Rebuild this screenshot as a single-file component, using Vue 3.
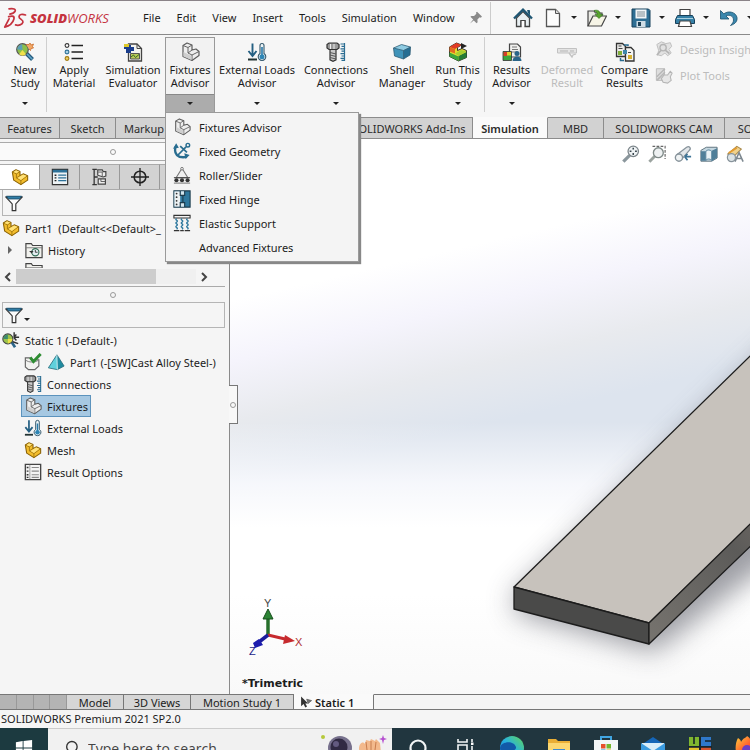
<script setup>
import { ref } from 'vue'

const menus = ['File', 'Edit', 'View', 'Insert', 'Tools', 'Simulation', 'Window']

const quickTools = [
  { icon: 'home', label: 'Home' },
  { icon: 'page', label: 'New', more: true },
  { icon: 'open', label: 'Open', more: true },
  { icon: 'save', label: 'Save', more: true },
  { icon: 'print', label: 'Print', more: true },
  { icon: 'undo', label: 'Undo', more: true },
]

const ribbon = [
  { icon: 'study', lines: ['New', 'Study'], more: true, divided: true },
  { icon: 'list', lines: ['Apply', 'Material'] },
  { icon: 'evaluator', lines: ['Simulation', 'Evaluator'] },
  { icon: 'fixture', lines: ['Fixtures', 'Advisor'], more: true, menu: true },
  { icon: 'loads', lines: ['External Loads', 'Advisor'], more: true },
  { icon: 'bolt', lines: ['Connections', 'Advisor'], more: true },
  { icon: 'shell', lines: ['Shell', 'Manager'] },
  { icon: 'run', lines: ['Run This', 'Study'], more: true, divided: true },
  { icon: 'results', lines: ['Results', 'Advisor'], more: true },
  { icon: 'deformed', lines: ['Deformed', 'Result'], disabled: true },
  { icon: 'compare', lines: ['Compare', 'Results'] },
]

const fixtureMenu = [
  { icon: 'fixture', label: 'Fixtures Advisor' },
  { icon: 'anchor', label: 'Fixed Geometry' },
  { icon: 'roller', label: 'Roller/Slider' },
  { icon: 'hinge', label: 'Fixed Hinge' },
  { icon: 'elastic', label: 'Elastic Support' },
  { icon: '', label: 'Advanced Fixtures' },
]

const leftTabs = ['Features', 'Sketch', 'Markup']
const rightTabs = ['SOLIDWORKS Add-Ins', 'Simulation', 'MBD', 'SOLIDWORKS CAM', 'SOLIDWORKS CAM TBM']
const activeTab = ref('Simulation')

const panelTabs = [
  { icon: 'part', label: 'Feature tree' },
  { icon: 'props', label: 'Properties' },
  { icon: 'config', label: 'Configurations' },
  { icon: 'target', label: 'Dimensions' },
  { icon: 'ball', label: 'Display' },
]

const study = [
  { icon: 'bolt', label: 'Connections' },
  { icon: 'fixture', label: 'Fixtures' },
  { icon: 'loads', label: 'External Loads' },
  { icon: 'part', label: 'Mesh' },
  { icon: 'options', label: 'Result Options' },
]
const selected = ref('Fixtures')

const viewTools = ['zoomfit', 'zoomarea', 'prevview', 'section', 'appearance']
const sheets = ['Model', '3D Views', 'Motion Study 1']
const taskIcons = ['cortana', 'taskview', 'edge', 'folder', 'store', 'mail', 'tiles', 'firefox']
</script>

<template>
  <div class="app">
    <svg class="sprite" aria-hidden="true">
      <defs>
        <linearGradient id="g-edge" x1="0" y1="1" x2="1" y2="0"><stop offset="0" stop-color="#1670c8" /><stop offset=".5" stop-color="#27b2e0" /><stop offset="1" stop-color="#62d657" /></linearGradient>
        <linearGradient id="g-fire" x1="0" y1="0" x2="1" y2="1"><stop offset="0" stop-color="#ffcf3a" /><stop offset=".5" stop-color="#ff5a2e" /><stop offset="1" stop-color="#c427a0" /></linearGradient>
      </defs>
      <symbol id="i-home" viewBox="0 0 20 20"><path d="M3.500 10v8.500h4.500v-5.500h4v5.500h4.500V10L10 3.500z" fill="#e9f0f3" stroke="#444" stroke-width="1.300" /><path d="M8 18v-5.500h4V18" fill="#fff" stroke="#444" stroke-width="1.200" /><path d="M1 10.500 10 1.700l9 8.800" fill="none" stroke="#1f5673" stroke-width="2.400" /><path d="M14.500 2.500h2v4z" fill="#1f5673" stroke="#1f5673" /></symbol>
      <symbol id="i-page" viewBox="0 0 20 20"><path d="M3.500 1.500h9l4 4v13h-13z" fill="#fdfdfd" stroke="#555" stroke-width="1.300" /><path d="M12.500 1.500v4h4" fill="#ddd" stroke="#555" /></symbol>
      <symbol id="i-open" viewBox="0 0 20 20"><path d="M1 18V3h6l1.500 2H15v4" fill="#e9e9e4" stroke="#444" stroke-width="1.200" /><path d="m1 18 5-10h13.500l-5 10z" fill="#f6f4e6" stroke="#444" stroke-width="1.200" /><path d="M7 2.500c4-1 6 .5 6.500 4h2.500l-4 4-4-4h2.500C10 4.500 9 3.500 7 2.500z" fill="#59a32d" stroke="#2d6b17" stroke-width=".6" /></symbol>
      <symbol id="i-save" viewBox="0 0 20 20"><path d="M1 1h16.500L19 2.500V19H1z" fill="#2e6e93" stroke="#17405a" /><path d="M4.500 1.500h11v9h-11z" fill="#f2f5f6" /><path d="M6 4h8M6 6h8M6 8h8" stroke="#7e8d95" /><path d="M5.500 13h9v6h-9z" fill="#cfdde5" /><path d="M7 14h3v4H7z" fill="#1c3f54" /></symbol>
      <symbol id="i-print" viewBox="0 0 20 20"><path d="M5 8V1.500h10V8" fill="#fff" stroke="#444" stroke-width="1.200" /><path d="M2.500 7.500h15l2 4v4H.5v-4z" fill="#3580a6" stroke="#17405a" /><path d="M5 13h10l1.500 5.500h-13z" fill="#fff" stroke="#444" stroke-width="1.200" /><path d="M2 10.500h16" stroke="#a8cfe0" /></symbol>
      <symbol id="i-undo" viewBox="0 0 20 20"><path d="M1.500 2.500v8.500H10L7 8c4-2 7.500.5 7.500 4 0 2-1 3.500-3 5.500 5-1.500 7-4.500 6.500-8C17 4.500 10 2 4.800 5.800z" fill="#3a87ad" stroke="#1b506d" stroke-width=".8" /></symbol>
      <symbol id="i-pin" viewBox="0 0 20 20"><path d="m11.500 1 7 7-1.500 1.500-1.700-.5-3.300 3.300.3 3.700-1.500 1.500-4-4L1.500 18 1 18.500 2 17l4-4.700-4-4L3.500 7l3.700.2 3.300-3.200-.5-1.700z" fill="#8a8a8a" /></symbol>
      <symbol id="i-study" viewBox="0 0 20 20"><path d="m11 11 6.500 6.500" stroke="#255b7d" stroke-width="4" /><path d="m11.500 11.500 5.700 5.700" stroke="#5fa4c8" stroke-width="1.600" /><circle cx="7.500" cy="7.500" r="5.800" fill="#8cc04a" stroke="#555" stroke-width="1.200" /><path d="M2.200 7.500a5.300 5.300 0 0 1 5-5.200L7.500 8z" fill="#5b9fb8" /><path d="M7.500 8 4 12.300a5.500 5.500 0 0 0 7 0z" fill="#f0e04a" /><path d="M11 2.500h3l1-1.500 1 2 2.500-1-1 2.500 1 1.500-2.500.5-.5 2-1.500-1.500" fill="#f3a866" stroke="#c96d2c" stroke-width=".8" /></symbol>
      <symbol id="i-list" viewBox="0 0 20 20"><path d="M7.500 3.500H19M7.500 10H19M7.500 16.500H19" stroke="#222" stroke-width="1.600" /><g fill="#fff" stroke-width="1.100"><circle cx="3" cy="3.500" r="1.900" stroke="#333" /><circle cx="3" cy="10" r="1.900" stroke="#2d7198" fill="#a9d1e5" /><circle cx="3" cy="16.500" r="1.900" stroke="#a07a10" fill="#ecd068" /></g></symbol>
      <symbol id="i-evaluator" viewBox="0 0 20 20"><path d="M5.500 2h8.500l4.500 4.500V19h-13z" fill="#f2f2ee" stroke="#444" stroke-width="1.300" /><path d="M14 2v4.500h4.500" fill="none" stroke="#444" /><path d="M1 3h7v2h3v4H8v2H3V7H1z" fill="#1a3d8c" /><path d="M1 2h5v3H1z" fill="#ddc92c" /><path d="M7.500 11.500h9v5.500h-9z" fill="#b9c85a" stroke="#555" /><path d="m8 15 2.500-2 2 2.500 3.500-3" fill="none" stroke="#35691d" /></symbol>
      <symbol id="i-fixture" viewBox="0 0 20 20"><path d="m3 3.500 4-2.500 5 2v5l4-1 3 2.500v4l-7 5-9-4z" fill="#eee" stroke="#5d5d5d" stroke-width="1.200" stroke-linejoin="round" /><path d="m3 3.500 5 2 4-2.500M8 5.500V11l4 2 7-3.500M12 13v5.500M8 11l4-3" fill="none" stroke="#666" /><path d="m3.500 10 8 4v4l-8-3.500z" fill="#cfcfcf" /></symbol>
      <symbol id="i-loads" viewBox="0 0 20 20"><path d="M5.500 1.500V13M1.500 9l4 5 4-5" fill="none" stroke="#245f82" stroke-width="1.900" /><path d="M1 17.500h9" stroke="#233" stroke-width="2" /><path d="M13 11.500V3.500a2 2 0 0 1 4 0v8a3.800 3.800 0 1 1-4 0z" fill="#eef5f8" stroke="#33576b" stroke-width="1.100" /><path d="M15 5v9" stroke="#277aaa" stroke-width="1.600" /><circle cx="15" cy="14.800" r="2.500" fill="#2f86b5" /></symbol>
      <symbol id="i-bolt" viewBox="0 0 20 20"><path d="M1 2.500 3 1h8l2 1.500V6l-2 1.500H3L1 6z" fill="#9a9a9a" stroke="#333" stroke-width="1.200" /><path d="M4.500 2v5M8 2v5" stroke="#eee" /><path d="M4 7.500h6v10.300L7 19.300l-3-1.500z" fill="#c9c9c9" stroke="#333" stroke-width="1.200" /><path d="m4 10.500 6 1.500m-6 1 6 1.500m-6 1 6 1.500" stroke="#555" /><path d="M18.500 1v18M14.500 2h4m-3 2.400h3m-4 2.400h4m-3 2.400h3m-4 2.400h4m-3 2.400h3m-4 2.400h4m-3 2h3" fill="none" stroke="#2b6d92" stroke-width="1.200" /></symbol>
      <symbol id="i-shell" viewBox="0 0 20 20"><path d="m1.500 6 8-3.500L18.500 5l-7 3.500z" fill="#8ecbe2" /><path d="m1.500 6 10 2.500V17l-9-3z" fill="#3f93b9" /><path d="m11.500 8.500 7-3.500-.5 8-6.500 4z" fill="#256d92" /><path d="m1.500 6 8-3.500L18.500 5l-.5 8-6.500 4-9-3zM1.500 6l10 2.500 7-3.500M11.500 8.500V17" fill="none" stroke="#2c5c75" stroke-width=".8" /></symbol>
      <symbol id="i-run" viewBox="0 0 20 20"><path d="m1.500 5 7-4 5 2-4 2.500v3l4.500-2 4.500 2v7l-8 3.500-9-4.500z" fill="#e5d92f" stroke="#333" /><path d="m1.500 5 7-4 5 2-6.500 4z" fill="#e03a26" /><path d="m1.500 5 5.500 2v4.500L1.500 9.500z" fill="#e26a22" /><path d="m1.500 10.500 9 4V19l-9-4.500z" fill="#3ba53c" /><path d="m10.500 14 8-4v5.500l-8 3.500z" fill="#267c36" /><path d="m7 11.500 6-3.500 5.500 1.500-8 4.500z" fill="#a6d032" /><path d="m13 1 6 3-6 3z" fill="#222" /></symbol>
      <symbol id="i-results" viewBox="0 0 20 20"><path d="M7.500 2h8l3 3v10h-11z" fill="#f0f0ee" stroke="#444" stroke-width="1.200" /><path d="M10 5h5M10 7.500h6M10 10h5" stroke="#777" /><path d="M1 9.500h8.500v9H1z" fill="#3ba53c" stroke="#333" stroke-width=".8" /><path d="M1.500 10H5v4H1.500z" fill="#d63d28" /><path d="M5 10h4v3.500H5z" fill="#e4cc2c" /><circle cx="15" cy="11.500" r="2.500" fill="#2a6488" /><path d="M10.500 19c0-6 9-6 9 0z" fill="#2a6488" /></symbol>
      <symbol id="i-deformed" viewBox="0 0 20 20"><path d="M.5 6.500h19v4.500H.5z" fill="#e4e4e4" stroke="#c2c2c2" /><path d="M3 9h8m2 0h4" stroke="#b5b5b5" /><path d="m12 11 3 4 1-2 3-1" fill="none" stroke="#c2c2c2" stroke-width="1.300" /></symbol>
      <symbol id="i-compare" viewBox="0 0 20 20"><path d="M1.500 1.500h6l3 3v10h-9z" fill="#ececea" stroke="#333" stroke-width="1.300" /><path d="M10.500 5.500h5.500l3 3V19h-8.500z" fill="#f4f4f2" stroke="#333" stroke-width="1.300" /><path d="M3 9h4v4H3z" fill="#7fae39" /><path d="M13 13h4v4h-4z" fill="#d8b231" /><path d="M3.500 4h3M3.500 6.500h4M13 10.500h3" stroke="#444" /><path d="M5.500 16v2.500H9M9 3h4v1" fill="none" stroke="#286b8f" stroke-width="1.500" /><path d="M8 8h4v4H8z" fill="#3f87ad" /></symbol>
      <symbol id="i-insight" viewBox="0 0 20 20"><path d="m2 5 5-3 5 2 5-1 1.500 4-3 3.500 2.500 4-4 3-3-3-4 3-4-1 1-5z" fill="#e2e2e2" stroke="#bbb" /><circle cx="9" cy="8.500" r="3.500" fill="none" stroke="#b5b5b5" stroke-width="1.500" /><path d="m11 11 5 4M2 17l5-6" stroke="#b5b5b5" stroke-width="1.800" /></symbol>
      <symbol id="i-plot" viewBox="0 0 20 20"><path d="M1.500 3h9v13h-9z" fill="#dedede" stroke="#b8b8b8" /><path d="m2 12 9-9M2 16l9-9" stroke="#b8b8b8" stroke-width="1.800" /><path d="M10 10h4l3-4 2 2-2 4 1 4-4 3-5-1-2-4z" fill="#e6e6e6" stroke="#b5b5b5" stroke-width="1.200" /></symbol>
      <symbol id="i-anchor" viewBox="0 0 20 20"><path d="M14.500 5.500 5 15M8 4.500l7.500 7" fill="none" stroke="#286d90" stroke-width="1.900" /><circle cx="16.500" cy="3.500" r="2" fill="none" stroke="#286d90" stroke-width="1.600" /><path d="M3 5c-2.500 8 2 13.500 12.500 11.500" fill="none" stroke="#286d90" stroke-width="2.600" /><path d="m0 7.500 3.500-6 3 5zM12.500 12.500l6 2-4.500 4.500z" fill="#286d90" /></symbol>
      <symbol id="i-roller" viewBox="0 0 20 20"><path d="M10 2.500 3.500 13h13z" fill="#f0f0f0" stroke="#777" stroke-width="1.200" /><circle cx="10" cy="3" r="1.500" fill="#eee" stroke="#777" /><path d="M1 13h18" stroke="#444" stroke-width="1.200" /><g fill="#333"><circle cx="3.800" cy="15.800" r="2.300" /><circle cx="10" cy="15.800" r="2.300" /><circle cx="16.200" cy="15.800" r="2.300" /></g><path d="M1 19h18" stroke="#666" /></symbol>
      <symbol id="i-hinge" viewBox="0 0 20 20"><path d="M1 1h18v18H1z" fill="#2e789e" stroke="#1d3c4d" stroke-width="1.200" /><path d="M1.500 1.500H8v17H1.500z" fill="#eef2f3" /><g fill="#333"><circle cx="4" cy="4" r="1" /><circle cx="4" cy="8" r="1" /><circle cx="4" cy="12" r="1" /><circle cx="4" cy="16" r="1" /></g><path d="M8.500 1.500h4v5h-4zM8.500 14h4v4.500h-4z" fill="#d3e6ee" /><path d="M8 1v5h3v8H8v5M13 1v5h-2m0 8h2v5" fill="none" stroke="#1d3c4d" stroke-width="1.200" /></symbol>
      <symbol id="i-elastic" viewBox="0 0 20 20"><path d="M1 1.500h18v3H1z" fill="#f4f4f4" stroke="#333" stroke-width="1.200" /><path d="M4 5c-3 2 3 2 0 4s3 2 0 4 3 2 0 4M10 5c-3 2 3 2 0 4s3 2 0 4 3 2 0 4M16 5c-3 2 3 2 0 4s3 2 0 4 3 2 0 4" fill="none" stroke="#2e789e" stroke-width="1.500" /><path d="M1 18.500h6m1 0h4m1 0h6" stroke="#333" stroke-width="1.400" /></symbol>
      <symbol id="i-part" viewBox="0 0 20 20"><path d="m1.500 4.500 4-2.500 4.500 2v4.500l3.500-2 5 2v5L11 18.500l-8-5z" fill="#f3bd2c" stroke="#8a6206" stroke-width="1.200" stroke-linejoin="round" /><path d="m1.500 4.500 4.500 2 4-2.500M6 6.500V11l5 3 7.500-5.500M11 14v4.500M6 11l4-2.500" fill="none" stroke="#a0760f" /><path d="m2.700 4.400 2.900-1.800L9 4 6 5.900zM7.300 11.100l6.200-3.900 3.700 1.500-6.200 4.500z" fill="#ffe27a" /></symbol>
      <symbol id="i-props" viewBox="0 0 20 20"><path d="M1.500 1.500h17v17h-17z" fill="#eef3f5" stroke="#333" stroke-width="1.300" /><path d="M2 2h16v3H2z" fill="#2d7198" /><path d="M4 8h2M4 11h2M4 14h2" stroke="#222" stroke-width="1.500" /><path d="M8 8h9M8 11h9M8 14h9" stroke="#2d7198" stroke-width="1.400" /></symbol>
      <symbol id="i-config" viewBox="0 0 20 20"><path d="M3.500 1v18M1.500 1.500h5M3.500 10h4M1.500 18.500h5" fill="none" stroke="#333" stroke-width="1.400" /><path d="M7.500 2h5l1 2h3v5l-3 1-6-2zM8 12h8v6H8z" fill="#eee" stroke="#444" stroke-width="1.300" /><path d="M8 4.500h4.500V9M11 12v3h5" fill="none" stroke="#555" /></symbol>
      <symbol id="i-target" viewBox="0 0 20 20"><circle cx="10" cy="10" r="6.500" fill="none" stroke="#222" stroke-width="1.700" /><path d="M10 0v20M0 10h20" stroke="#222" stroke-width="1.500" /></symbol>
      <symbol id="i-ball" viewBox="0 0 20 20"><circle cx="10" cy="10" r="8" fill="#5aa2c6" /><path d="M10 2a8 8 0 0 1 8 8h-8z" fill="#e6c12f" /><path d="M2 10a8 8 0 0 0 8 8v-8z" fill="#c73b2b" /></symbol>
      <symbol id="i-filter" viewBox="0 0 20 20"><path d="M1 3.500h18l-7 7.500v7.500h-4V11z" fill="#fbfbfb" stroke="#333" stroke-width="1.300" /><path d="M1.500 2.500h17l-2.500 3H4z" fill="#2f7da6" stroke="#1c4f6c" /></symbol>
      <symbol id="i-history" viewBox="0 0 20 20"><path d="M1 3h6l1.500 2H19v13.500H1z" fill="#f2f2ee" stroke="#444" stroke-width="1.300" /><path d="M1 7.500h18" stroke="#777" /><circle cx="11.500" cy="12.500" r="4" fill="#e4eef2" stroke="#2d6b53" stroke-width="1.200" /><path d="M11.500 10v2.500h2.500" fill="none" stroke="#333" /><path d="m4.500 11 3 3 2-3z" fill="#333" /></symbol>
      <symbol id="i-static" viewBox="0 0 20 20"><path d="m10.500 12 4 6" stroke="#2b6588" stroke-width="3" /><circle cx="6.500" cy="8.800" r="5.600" fill="#9cc44a" stroke="#444" stroke-width="1.200" /><path d="M1.500 8.800a5 5 0 0 1 5-5v5z" fill="#3d8c6d" /><path d="M6.500 8.800h5a5 5 0 0 1-5 5z" fill="#ece04a" /><path d="M19 7h-6m0 0 3-3m-3 3 3 3.500M13.500 7V1.500M12 12l6 2" fill="none" stroke="#333" stroke-width="1.600" /></symbol>
      <symbol id="i-check" viewBox="0 0 20 20"><path d="M1.500 5.500h5.500l1.500 2h8v7l-4.500 4H5l-3.500-3z" fill="#f2f2f0" stroke="#666" stroke-width="1.300" /><path d="M2 8c3 2.500 10 3 14 0" fill="none" stroke="#777" /><path d="m7 5 3.500 4.500L18.500 1" fill="none" stroke="#2f8d33" stroke-width="3.200" /></symbol>
      <symbol id="i-cone" viewBox="0 0 20 20"><path d="M11 2 1.500 16.500l10 2z" fill="#5fd0dc" /><path d="m11 2 .5 16.500 7.500-4z" fill="#1f8ba0" /><path d="M11 2 1.500 16.500l10 2 7.500-4z" fill="none" stroke="#286b7a" stroke-width=".9" /><path d="m11 2 .5 16.500" stroke="#ecfbfc" stroke-width=".8" /></symbol>
      <symbol id="i-options" viewBox="0 0 20 20"><path d="M1.500 1.500h17v17h-17z" fill="#f4f4f4" stroke="#444" stroke-width="1.500" /><path d="M6.500 2v16" stroke="#999" /><path d="M3 5h2M3 9h2M3 13h2M3 16h2" stroke="#333" stroke-width="1.500" /><path d="M8.500 5h8M8.500 9h8M8.500 13h8M8.500 16h8" stroke="#8a8a8a" stroke-width="1.200" /></symbol>
      <symbol id="i-cursor" viewBox="0 0 20 20"><path d="M3 2v14l3.500-3 2.500 5 2.500-1.500-2.500-4.500h4z" fill="#333" /><path d="m11 6 7 2-5 4z" fill="#777" stroke="#555" /></symbol>
      <symbol id="i-zoomfit" viewBox="0 0 20 20"><path d="m8.500 11.500-7 7" stroke="#8b979d" stroke-width="3.600" /><circle cx="12.500" cy="7" r="5.800" fill="#eef2f4" stroke="#7b8489" stroke-width="1.400" /><path d="M12.500 3v2m0 4v2M8.500 7h2m4 0h2" stroke="#39464d" stroke-width="1.700" /></symbol>
      <symbol id="i-zoomarea" viewBox="0 0 20 20"><path d="m7.500 12.500-6 6" stroke="#9ba39f" stroke-width="3.200" /><circle cx="11.500" cy="8.500" r="5.500" fill="#eef1f2" stroke="#7f8a88" stroke-width="1.500" /><path d="M5 1.500h14v14" fill="none" stroke="#666" stroke-width="1.300" stroke-dasharray="3 1.500" /></symbol>
      <symbol id="i-prevview" viewBox="0 0 20 20"><path d="M3.500 10.500 14 2.500c3-2 5.500 1 3 3.500L8.500 16z" fill="#e3e7ea" stroke="#87939b" stroke-width="1.400" /><circle cx="5.500" cy="14" r="4" fill="#f0f3f4" stroke="#87939b" stroke-width="1.500" /><path d="M19 13h-7m0 0 3-3m-3 3 3 4" fill="none" stroke="#3c7396" stroke-width="1.900" /></symbol>
      <symbol id="i-section" viewBox="0 0 20 20"><path d="m1 6 6-3.500h12v12L13 18H1z" fill="#c5d7e0" stroke="#627782" stroke-width="1.100" /><path d="M1 7h5.500v10.500H1zM13 6.500l6-3V14l-6 4z" fill="#507f99" /><path d="M6.500 7c2-2 4.500-2 6.500 0v10c-2-2-4.500-2-6.500 0z" fill="#e9f1f5" stroke="#507f99" /></symbol>
      <symbol id="i-appearance" viewBox="0 0 20 20"><path d="M2 10 12 1.500l5 3-8 8z" fill="#f0d28d" stroke="#a9894a" stroke-width="1.200" /><circle cx="6" cy="14" r="4.500" fill="#dce3e6" stroke="#87939b" stroke-width="1.300" /><path d="m10 18.500 4.500-10 4.500 10m-7-3.500h5" fill="none" stroke="#7d8890" stroke-width="1.700" /><path d="m3 9 9-6" stroke="#e49b2f" stroke-width="2" /></symbol>
      <symbol id="i-search" viewBox="0 0 20 20"><circle cx="11" cy="7.500" r="5.800" fill="none" stroke="#333" stroke-width="1.500" /><path d="m7 12-5 6" stroke="#333" stroke-width="1.500" /></symbol>
      <symbol id="i-windows" viewBox="0 0 20 20"><path d="m1 3.500 7.500-1.200v7.200H1zM9.500 2.200 19 1v8.500H9.500zM1 10.500h7.500v7.200L1 16.500zM9.500 10.500H19V19l-9.500-1.200z" fill="#fff" /></symbol>
      <symbol id="i-cortana" viewBox="0 0 24 24"><circle cx="12" cy="12" r="7.500" fill="none" stroke="#f2f5f6" stroke-width="2.200" /></symbol>
      <symbol id="i-taskview" viewBox="0 0 24 24"><path d="M5 3v3h9V3M5 21v-3h9v3M5 9h9v6H5zM19 3v3m0 4v11" fill="none" stroke="#f2f5f6" stroke-width="1.600" /><path d="M18 6.500h2.500V9H18z" fill="#fff" /></symbol>
      <symbol id="i-edge" viewBox="0 0 24 24"><circle cx="12" cy="12" r="12" fill="url(#g-edge)" /><path d="M0 12C1 5 14 4 16 11c.5 3-3 3-3 5 0 3 7 4 10 0-4 10-20 10-23-4z" fill="#125aa8" /></symbol>
      <symbol id="i-folder" viewBox="0 0 24 24"><path d="M1 3h8l2 2h12v17H1z" fill="#e9ae35" /><path d="M1 7h22v15H1z" fill="#fbd771" /><path d="M6 13h12v9H6z" fill="#3d8ad0" /></symbol>
      <symbol id="i-store" viewBox="0 0 24 24"><path d="M7 5V1h10v4" fill="none" stroke="#41a6e2" stroke-width="2" /><path d="M0 4h24v17H0z" fill="#f3f6f7" /><path d="M7 8h4.500v4.500H7z" fill="#e64f2b" /><path d="M12.500 8H17v4.500h-4.500z" fill="#73b62e" /><path d="M7 13.500h4.500V18H7z" fill="#2a9bd7" /><path d="M12.500 13.500H17V18h-4.500z" fill="#f0b52a" /></symbol>
      <symbol id="i-mail" viewBox="0 0 24 24"><path d="m0 9 12-8 12 8v13H0z" fill="#1566b8" /><path d="M1 7h22v14H1z" fill="#d9edf9" /><path d="m0 7 12 8 12-8v15H0z" fill="#3a9be0" /></symbol>
      <symbol id="i-tiles" viewBox="0 0 24 24"><path d="M1 1h10v9H1z" fill="#7fb72f" /><path d="M13 1h10v9H13z" fill="#2f78c9" /><path d="M1 11h10v11H1z" fill="#e4c22f" /><path d="M13 11h10v11H13z" fill="#d7542d" /><path d="M12 0v24M0 11h24M6 0v8M17 5h6" stroke="#142229" stroke-width="1.600" /></symbol>
      <symbol id="i-firefox" viewBox="0 0 24 24"><path d="M3 2c2 1 3 3 3 4 2-4 5-4 6-6 3 2 4 4 5 6l2-2c3 4 5 8 4 12-3 9-19 9-22-1C0 12 1 5 3 2z" fill="url(#g-fire)" /><circle cx="12" cy="14" r="5" fill="#6b3fc4" /></symbol>
    </svg>

    <header class="menubar">
      <svg class="brand" viewBox="0 0 30 24" aria-hidden="true">
        <g fill="none" stroke="#c5333f" stroke-width="2" stroke-linecap="round" stroke-linejoin="round">
          <path d="M7 1.500c5-1 8 .3 7 2.500-.8 1.800-3 3-6 3.500" />
          <path d="M6.500 10.500c5-1.500 7-.5 6 3-1.200 4.500-4.500 7.500-10.500 9L7 13" />
          <path d="M26 8.500c-4-1.500-7.500-.5-7.500 2 0 3 5.500 3.500 4.500 6.500-1 3-5 4-8.500 3" />
        </g>
      </svg>
      <span class="word"><b>SOLID</b>WORKS</span>
      <nav class="menus">
        <button v-for="m in menus" :key="m" type="button">{{ m }}</button>
      </nav>
      <button class="pin" type="button" aria-label="Pin menu"><svg class="ic-s"><use href="#i-pin" /></svg></button>
      <div class="quick">
        <button v-for="t in quickTools" :key="t.icon" type="button" :aria-label="t.label" :class="{ solo: !t.more }">
          <svg class="ic"><use :href="'#i-' + t.icon" /></svg>
          <i v-if="t.more" class="caret"></i>
        </button>
      </div>
    </header>

    <section class="ribbon">
      <div v-for="r in ribbon" :key="r.icon" class="cell" :class="{ divided: r.divided, open: r.menu }">
        <button class="tool" type="button" :disabled="r.disabled">
          <svg class="ic"><use :href="'#i-' + r.icon" /></svg>
          <span v-for="l in r.lines" :key="l">{{ l }}</span>
          <span v-if="r.more" class="drop"><i class="caret"></i></span>
        </button>
        <ul v-if="r.menu" class="popup">
          <li v-for="f in fixtureMenu" :key="f.label">
            <button type="button"><svg class="ic"><use v-if="f.icon" :href="'#i-' + f.icon" /></svg>{{ f.label }}</button>
          </li>
        </ul>
      </div>
      <div class="side">
        <button type="button" disabled><svg class="ic"><use href="#i-insight" /></svg>Design Insight</button>
        <button type="button" disabled><svg class="ic"><use href="#i-plot" /></svg>Plot Tools</button>
      </div>
    </section>

    <nav class="tabs">
      <button v-for="t in leftTabs" :key="t" type="button" :class="{ active: t === activeTab }" @click="activeTab = t">{{ t }}</button>
      <span class="gap"></span>
      <button v-for="t in rightTabs" :key="t" type="button" :class="{ active: t === activeTab }" @click="activeTab = t">{{ t }}</button>
    </nav>

    <main class="work">
      <aside class="panel">
        <div class="grip first"><i class="knob"></i></div>
        <div class="ptabs">
          <button v-for="(p, i) in panelTabs" :key="p.icon" type="button" :aria-label="p.label" :class="{ active: i === 0 }"><svg class="ic"><use :href="'#i-' + p.icon" /></svg></button>
        </div>
        <button class="filter upper" type="button" aria-label="Filter features"><svg class="ic"><use href="#i-filter" /></svg></button>
        <div class="row root"><svg class="ic"><use href="#i-part" /></svg><span>Part1&nbsp; (Default&lt;&lt;Default&gt;_</span></div>
        <div class="row history"><i class="twist"></i><svg class="ic"><use href="#i-history" /></svg>History</div>
        <div class="peek"><svg class="ic"><use href="#i-history" /></svg></div>
        <div class="scroll"><button type="button" aria-label="Scroll left"><svg class="chev" viewBox="0 0 8 10"><path d="M6 1 2 5l4 4" /></svg></button><div class="track"><div class="thumb"></div></div><button type="button" aria-label="Scroll right"><svg class="chev" viewBox="0 0 8 10"><path d="m2 1 4 4-4 4" /></svg></button></div>
        <div class="grip"><i class="knob"></i></div>
        <button class="filter" type="button" aria-label="Filter study"><svg class="ic"><use href="#i-filter" /></svg><i class="caret"></i></button>
        <div class="tree">
          <div class="row root"><svg class="ic"><use href="#i-static" /></svg>Static 1 (-Default-)</div>
          <div class="row leaf"><svg class="ic"><use href="#i-check" /></svg><svg class="ic"><use href="#i-cone" /></svg>Part1 (-[SW]Cast Alloy Steel-)</div>
          <button v-for="s in study" :key="s.label" type="button" class="row leaf" :class="{ picked: s.label === selected }" @click="selected = s.label">
            <svg class="ic"><use :href="'#i-' + s.icon" /></svg>{{ s.label }}
          </button>
        </div>
      </aside>

      <section class="view">
        <svg class="scene" viewBox="0 0 520 554" preserveAspectRatio="xMaxYMax meet" aria-hidden="true">
          <defs>
            <filter id="soft" x="-30%" y="-30%" width="160%" height="160%"><feGaussianBlur stdDeviation="14" /></filter>
            <linearGradient id="g-side" x1="0" y1="1" x2="1" y2="0"><stop offset="0" stop-color="#77746f" /><stop offset=".6" stop-color="#5c5b59" /><stop offset="1" stop-color="#776f69" /></linearGradient>
          </defs>
          <path d="M282 458 570 182V400L424 512l-136-38z" fill="#5a5b66" opacity=".6" filter="url(#soft)" />
          <g stroke="#1c1c1c" stroke-width="1.300" stroke-linejoin="round">
            <path d="M284 447 560 177V347L419 483z" fill="#c7c2bc" />
            <path d="m284 447 135 36v21l-135-35z" fill="#4a4a49" />
            <path d="m419 483 141-138v23L419 504z" fill="url(#g-side)" />
          </g>
        </svg>
        <div class="viewbar">
          <button v-for="v in viewTools" :key="v" type="button" :aria-label="v"><svg class="ic"><use :href="'#i-' + v" /></svg></button>
        </div>
        <button class="handle" type="button" aria-label="Collapse panel"><i class="knob"></i></button>
        <div class="orient">
          <svg class="triad" viewBox="0 0 66 64" aria-hidden="true">
            <path d="M26 38V20" stroke="#27702c" stroke-width="3.500" /><path d="m26 12 5 10H21z" fill="#2c8435" stroke="#174f1d" />
            <path d="m26 38 17 4" stroke="#c62a2e" stroke-width="3" /><path d="m43 38 10 6-12 3z" fill="#c62a2e" />
            <path d="m26 38-9 7" stroke="#1d1d9c" stroke-width="3.500" /><path d="m17 42 4 6-8 3-2-5z" fill="#1d1dae" />
            <text x="22" y="10" fill="#444">Y</text><text x="53" y="49" fill="#b03035">X</text><text x="7" y="58" fill="#1c1c88">Z</text>
          </svg>
          <strong>*Trimetric</strong>
        </div>
      </section>
    </main>

    <nav class="sheets">
      <div class="pager"><i v-for="n in 4" :key="n"></i></div>
      <button v-for="s in sheets" :key="s" type="button">{{ s }}</button>
      <button type="button" class="active"><svg class="ic-s"><use href="#i-cursor" /></svg>Static 1</button>
      <div class="rest"></div>
    </nav>

    <footer class="status">SOLIDWORKS Premium 2021 SP2.0</footer>

    <div class="taskbar">
      <button class="start" type="button" aria-label="Start"><svg class="ic"><use href="#i-windows" /></svg></button>
      <div class="search">
        <svg class="ic"><use href="#i-search" /></svg>
        <input type="text" aria-label="Search" placeholder="Type here to search" />
        <svg class="art" viewBox="0 0 70 36" aria-hidden="true">
          <circle cx="5" cy="6" r="2" fill="#b6c93b" /><circle cx="22" cy="17" r="12" fill="#77718d" /><circle cx="21" cy="16" r="8.500" fill="#312a44" /><circle cx="18" cy="13" r="3" fill="#635a80" />
          <path d="M41 18c0-6 4-8 6-5l1-4 4 1 1-2 4 2 1-2 4 4 1 10v14H44z" fill="#f3b98c" /><path d="m48 11 1 8m4-9v9m5-8-1 8m-14 2 8 2" stroke="#c77c4e" fill="none" />
          <path d="m65 4 1 3 3 1-3 1-1 4-1-4-3-1 3-1z" fill="#b54fd0" />
        </svg>
      </div>
      <button v-for="t in taskIcons" :key="t" class="app-btn" type="button" :aria-label="t"><svg class="ic-l"><use :href="'#i-' + t" /></svg></button>
    </div>
  </div>
</template>

<style>
html, body { margin: 0; overflow: hidden; }
</style>

<style scoped>
.app {
  height: 100vh;
  display: flex;
  flex-direction: column;
  overflow: hidden;
  background: #f5f5f5;
  color: #1c1c1c;
  font-family: "Noto Sans", "Open Sans", sans-serif;
  font-size: 11px;
  line-height: 13px;
}
.app * { box-sizing: border-box; }
.sprite { position: absolute; width: 0; height: 0; }
button, input { font: inherit; color: inherit; background: none; border: 0; padding: 0; margin: 0; border-radius: 0; }
button { white-space: nowrap; }
.ic { width: 18px; height: 18px; flex: none; display: block; }
.ic-s { width: 14px; height: 14px; flex: none; display: block; }
.ic-l { width: 24px; height: 24px; flex: none; display: block; }
.caret { display: block; width: 0; height: 0; border: 3px solid transparent; border-top-color: #222; border-bottom-width: 0; }
.knob { width: 6px; height: 6px; border: 1px solid #999; border-radius: 50%; display: block; }

.menubar { flex: none; height: 35px; display: flex; align-items: center; border-top: 1px solid #8a8388; border-bottom: 1px solid #8a8a8a; background: #f7f7f7; padding-left: 3px; overflow: hidden; }
.brand { width: 26px; height: 22px; flex: none; }
.word { color: #c5333f; font: italic 13px/16px "Open Sans", sans-serif; width: 106px; flex: none; padding-left: 1px; }
.word b { font-weight: 800; }
.menus { display: flex; gap: 16px; padding-left: 8px; }
.pin { padding-left: 14px; }
.quick { display: flex; align-items: center; gap: 6px; border-left: 1px solid #ccc; height: 32px; margin-left: auto; flex: none; padding-left: 22px; width: 260px; }
.quick .ic { width: 20px; height: 20px; }
.quick button { display: flex; align-items: center; gap: 8px; flex: none; width: 38px; }
.quick button.solo { width: 24px; }

.ribbon { flex: none; height: 82px; display: grid; grid-template-columns: 43px 54px 64px 50px 84px 74px 58px 54px 53px 58px 57px 1fr; padding: 2px 0 5px 4px; background: #f6f6f6; }
.cell { position: relative; }
.cell.divided { border-right: 1px solid #cfcfcf; }
.tool { width: 100%; height: 100%; display: flex; flex-direction: column; align-items: center; padding-top: 5px; }
.tool .ic { margin-bottom: 1px; width: 20px; height: 20px; }
.tool:disabled, .side button:disabled { color: #bcbcbc; }
.drop { margin-top: auto; width: 100%; height: 18px; display: flex; align-items: center; justify-content: center; }
.cell.open { border: 1px solid #999; border-bottom: 0; background: #f2f2f2; }
.cell.open .tool { padding-top: 4px; }
.cell.open .drop { background: #acacac; border-top: 1px solid #888; }
.popup { position: absolute; z-index: 5; top: 74px; left: -1px; width: 194px; margin: 0; padding: 2px; list-style: none; background: #f4f4f4; border: 1px solid #9a9a9a; box-shadow: 2px 2px 1px #888; }
.popup button { display: flex; align-items: center; gap: 8px; height: 24px; width: 100%; padding-left: 5px; }
.side { display: flex; flex-direction: column; gap: 8px; padding: 3px 0 0 2px; overflow: hidden; }
.side button { display: flex; align-items: center; gap: 7px; height: 18px; }

.tabs { flex: none; height: 22px; display: grid; grid-template-columns: 60px 56px 57px 173px 127px 75px 56px 121px 150px; border-bottom: 1px solid #8c8c8c; overflow: hidden; }
.tabs button, .tabs .gap { background: #d2d2d2; border-top: 1px solid #8c8c8c; border-right: 1px solid #8c8c8c; overflow: hidden; color: #2a2a2a; }
.tabs button.active { background: #fafafa; border-top-color: transparent; font-weight: 600; }

.work { flex: 1; min-height: 0; display: flex; }
.panel { width: 230px; flex: none; border-right: 1px solid #8a8a8a; display: flex; flex-direction: column; overflow: hidden; background: #f5f5f5; }
.grip { height: 16px; flex: none; margin-right: 4px; border-top: 1px solid #aaa; display: flex; align-items: center; justify-content: center; }
.grip.first { height: 19px; margin: 3px 4px 3px 0; border-bottom: 1px solid #aaa; background: #fafafa; }
.ptabs { flex: none; height: 26px; display: flex; border-bottom: 1px solid #aaa; }
.ptabs button { width: 40px; flex: none; display: flex; align-items: center; justify-content: center; background: #d2d2d2; border-right: 1px solid #999; border-top: 1px solid #aaa; }
.ptabs button.active { background: #fff; }
.filter { flex: none; height: 26px; margin: 0 4px 0 2px; border: 1px solid #b5b5b5; display: flex; align-items: center; padding-left: 2px; gap: 1px; }
.filter .caret { margin-top: 8px; }
.filter.upper { border-top: 0; margin-bottom: 1px; }
.row { height: 22px; display: flex; align-items: center; gap: 5px; white-space: nowrap; flex: none; padding: 0 3px; }
.row.root { padding-left: 2px; overflow: hidden; }
.row.history { padding-left: 8px; }
.twist { width: 0; height: 0; border: 4px solid transparent; border-left-color: #666; border-right-width: 0; margin-right: 8px; }
.peek { height: 7px; flex: none; overflow: hidden; padding-left: 25px; }
.scroll { height: 17px; flex: none; display: flex; align-items: center; margin: 0 17px 1px 0; }
.scroll button { width: 16px; display: flex; justify-content: center; }
.chev { width: 8px; height: 10px; }
.chev path { fill: none; stroke: #444; stroke-width: 2; }
.track { flex: 1; height: 15px; background: #f0f0f0; }
.thumb { width: 78%; height: 100%; background: #cdcdcd; }
.tree { padding-top: 1px; display: flex; flex-direction: column; align-items: flex-start; }
.row.leaf { margin-left: 21px; border: 1px solid transparent; padding: 0 2px; }
.row.picked { background: #a6c8e2; border-color: #5c93bd; }

.view { position: relative; flex: 1; min-width: 0; background: linear-gradient(to bottom, rgba(255, 255, 255, 0) 51%, rgba(252, 252, 255, .8) 62%, #fff 70%, #fff 82%, #f9f9f9), linear-gradient(167deg, #fff 24%, #f5f4fc 33%, #e8eaee 42%, #dde4ee 51%); }
.scene { position: absolute; inset: 0; width: 100%; height: 100%; }
.viewbar { position: absolute; top: 6px; right: 6px; display: flex; gap: 8px; }
.handle { position: absolute; left: -1px; top: 246px; width: 9px; height: 39px; background: #f8f8f8; border: 1px solid #777; border-left: 0; display: flex; align-items: center; justify-content: center; }
.orient { position: absolute; left: 12px; bottom: 3px; display: flex; flex-direction: column; gap: 16px; }
.orient strong { font: bold 11px/14px "DejaVu Sans", sans-serif; }
.triad { width: 66px; height: 64px; }
.triad text { font: 11px "Liberation Sans", sans-serif; }

.sheets { flex: none; height: 16px; display: grid; grid-template-columns: 67px 57px 67px 103px 80px 1fr; border-bottom: 1px solid #777; }
.sheets button { background: #d6d6d6; border-top: 1px solid #777; border-right: 1px solid #777; }
.sheets .active { background: #fafafa; border-top-color: transparent; font-weight: 600; display: flex; align-items: center; gap: 2px; padding-left: 5px; }
.sheets .rest { border-top: 1px solid #777; }
.pager { display: flex; background: #b4b4b4; border-top: 1px solid #777; }
.pager i { flex: 1; border-right: 1px solid #999; }
.status { flex: none; height: 18px; line-height: 18px; padding-left: 1px; }

.taskbar { flex: none; height: 22px; overflow: hidden; display: flex; align-items: flex-start; background: #21363f; }
.start { width: 48px; height: 40px; flex: none; background: #1c3a40; display: flex; align-items: center; justify-content: center; }
.search { width: 344px; height: 40px; flex: none; display: flex; align-items: center; background: #f1f1f1; border-top: 1px solid #ccc; padding-left: 14px; gap: 8px; margin-right: 2px; }
.search input { flex: 1; min-width: 0; font-family: "Open Sans", sans-serif; font-size: 14px; height: 24px; outline: 0; }
.search input::placeholder { color: #444; opacity: 1; }
.art { width: 70px; height: 36px; flex: none; margin-right: 4px; }
.app-btn { width: 47px; height: 40px; flex: none; display: flex; align-items: center; justify-content: center; }
</style>
